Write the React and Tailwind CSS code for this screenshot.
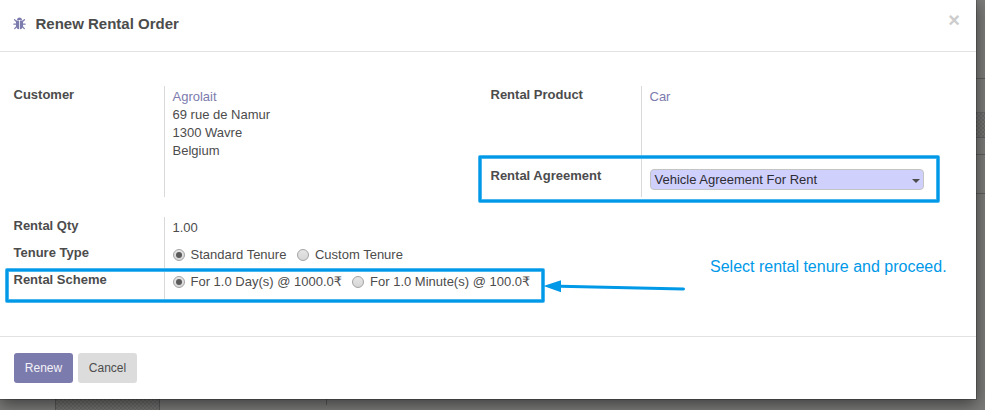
function BugIcon() {
  return (
    <svg viewBox="0 0 13 13" className="-mt-px size-[13px] shrink-0 fill-[#7c7bad]" aria-hidden="true">
      <path d="M4 3C4 1.2 5 .4 6.5.4S9 1.2 9 3Z" />
      <path d="M3 3.6H6.1V12.2C4.2 12 3 10.8 3 8.7ZM10 3.6H6.9V12.2C8.8 12 10 10.8 10 8.7Z" />
      <path
        d="M3.5 4.6L1.6 2.7M9.5 4.6L11.4 2.7M3.2 7.2H.9M9.8 7.2H12.1M3.5 9.6L1.7 11.6M9.5 9.6L11.3 11.6"
        className="stroke-[#7c7bad] [stroke-linecap:round]"
        strokeWidth="1.25"
      />
    </svg>
  );
}

function Label({ children, className = "" }) {
  return <div className={`font-bold leading-[18px] ${className}`}>{children}</div>;
}

function Rupee() {
  return <span className="font-['DejaVu_Sans',sans-serif] leading-none">₹</span>;
}

function Radio({ checked, children }) {
  return (
    <label className="flex items-center whitespace-nowrap">
      <span className="mr-[6px] flex size-3 items-center justify-center rounded-full border border-[#a3a3a3] bg-linear-to-b from-[#e6e6e6] to-[#d6d6d6]">
        {checked && <span className="size-[6px] rounded-full bg-[#5a5a5a]" />}
      </span>
      <span>{children}</span>
    </label>
  );
}

function Annotations() {
  return (
    <svg className="pointer-events-none absolute left-0 top-0 z-20" width="985" height="410" fill="none" aria-hidden="true">
      <g strokeLinejoin="round" strokeLinecap="round">
        <g stroke="#62c1f2" strokeWidth="4">
          <rect x="480" y="157" width="458" height="44" />
          <rect x="7" y="270" width="536" height="31" />
        </g>
        <g stroke="#0099e8" strokeWidth="2.6">
          <rect x="480" y="157" width="458" height="44" />
          <rect x="7" y="270" width="536" height="31" />
        </g>
        <path d="M560 286.3L683.5 289" stroke="#0099e8" strokeWidth="3" />
      </g>
      <path d="M543.5 286L561 280.2V292.3Z" fill="#0099e8" />
    </svg>
  );
}

const hatch =
  "bg-[repeating-conic-gradient(#747473_0_25%,#696968_0_50%)] bg-size-[4px_4px]";

export default function App() {
  return (
    <div className="relative flex h-[410px] w-[985px] flex-col overflow-hidden bg-[#7b7b7a] font-['Liberation_Sans',Arial,sans-serif] text-[13px] text-[#4c4c4c]">
      <div className="flex h-[399px]">
        <main className="z-10 flex w-[976px] flex-col bg-white shadow-[0_5px_15px_rgba(0,0,0,0.5),0_0_0_1px_rgba(0,0,0,0.2)]">
          <header className="flex h-[52px] items-center border-b border-[#e2e2e2] pb-[3px] pl-[13px] pr-4">
            <BugIcon />
            <h1 className="ml-[9.5px] flex-1 text-[15px] font-bold leading-5">Renew Rental Order</h1>
            <button className="-mt-[8px] text-[20px] font-bold leading-5 text-[#ccc]">×</button>
          </header>
          <section className="flex-1 pl-[13.5px] pt-[34px]">
            <div className="flex h-[111px]">
              <div className="flex w-[477px]">
                <Label className="w-[150px]">Customer</Label>
                <div className="border-l border-[#d9d9d9] pl-2 pt-[2px] leading-[18px]">
                  <a className="text-[#7c7bad]">Agrolait</a>
                  <div>69 rue de Namur</div>
                  <div>1300 Wavre</div>
                  <div>Belgium</div>
                </div>
              </div>
              <div className="flex">
                <div className="w-[150px]">
                  <Label className="h-[81px]">Rental Product</Label>
                  <Label>Rental Agreement</Label>
                </div>
                <div className="border-l border-[#d9d9d9] pl-2 pt-[2px] leading-[18px]">
                  <div className="h-[81px] text-[#7c7bad]">Car</div>
                  <div className="flex h-[21px] w-[274px] items-center justify-between rounded-[4px] border border-[#c4c4c4] bg-[#d0d0fd] pl-1 pr-[3px] text-[#2d2d33]">
                    <span>Vehicle Agreement For Rent</span>
                    <span className="mt-[3px] border-x-4 border-t-4 border-x-transparent border-t-[#4c4c4c]" />
                  </div>
                </div>
              </div>
            </div>
            <div className="mt-5 flex h-[84px]">
              <div className="flex w-[150px] flex-col gap-[9px]">
                <Label>Rental Qty</Label>
                <Label>Tenure Type</Label>
                <Label>Rental Scheme</Label>
              </div>
              <div className="flex flex-col gap-[9px] border-l border-[#d9d9d9] pl-2 pt-[2px] leading-[18px]">
                <div>1.00</div>
                <div className="flex gap-[10.6px]">
                  <Radio checked>Standard Tenure</Radio>
                  <Radio>Custom Tenure</Radio>
                </div>
                <div className="flex h-[18px] gap-[10px]">
                  <Radio checked>For 1.0 Day(s) @ 1000.0<Rupee /></Radio>
                  <Radio>For 1.0 Minute(s) @ 100.0<Rupee /></Radio>
                </div>
              </div>
            </div>
          </section>
          <footer className="flex h-[63px] gap-[5px] border-t border-[#e2e2e2] pl-[14px] pt-4 text-[12px]">
            <button className="h-[30px] w-[59px] rounded-[3px] bg-[#7c7bad] text-[#f2f2f8]">Renew</button>
            <button className="h-[30px] w-[59px] rounded-[3px] bg-[#dcdcdc]">Cancel</button>
          </footer>
        </main>
        <aside className="flex flex-1 flex-col">
          <div className="h-[79px] border-b border-[#5e5e5e]" />
          <div className="h-[34px] border-b border-[#666]" />
          <div className={`h-[25px] border-b border-[#5e5e5e] ${hatch}`} />
          <div className="h-[17px] border-b border-[#5e5e5e]" />
          <div className="h-[39px] border-b border-[#5e5e5e]" />
        </aside>
      </div>
      <div className="flex flex-1">
        <div className={`ml-[55px] w-[105px] border-x border-[#585858] ${hatch}`} />
        <div className="h-[6px] w-[167px] border-r border-[#5a5a5a]" />
      </div>
      <Annotations />
      <p className="absolute left-[710px] top-[257px] z-20 whitespace-nowrap text-[16px] leading-5 text-[#0099e8]">
        Select rental tenure and proceed.
      </p>
    </div>
  );
}
